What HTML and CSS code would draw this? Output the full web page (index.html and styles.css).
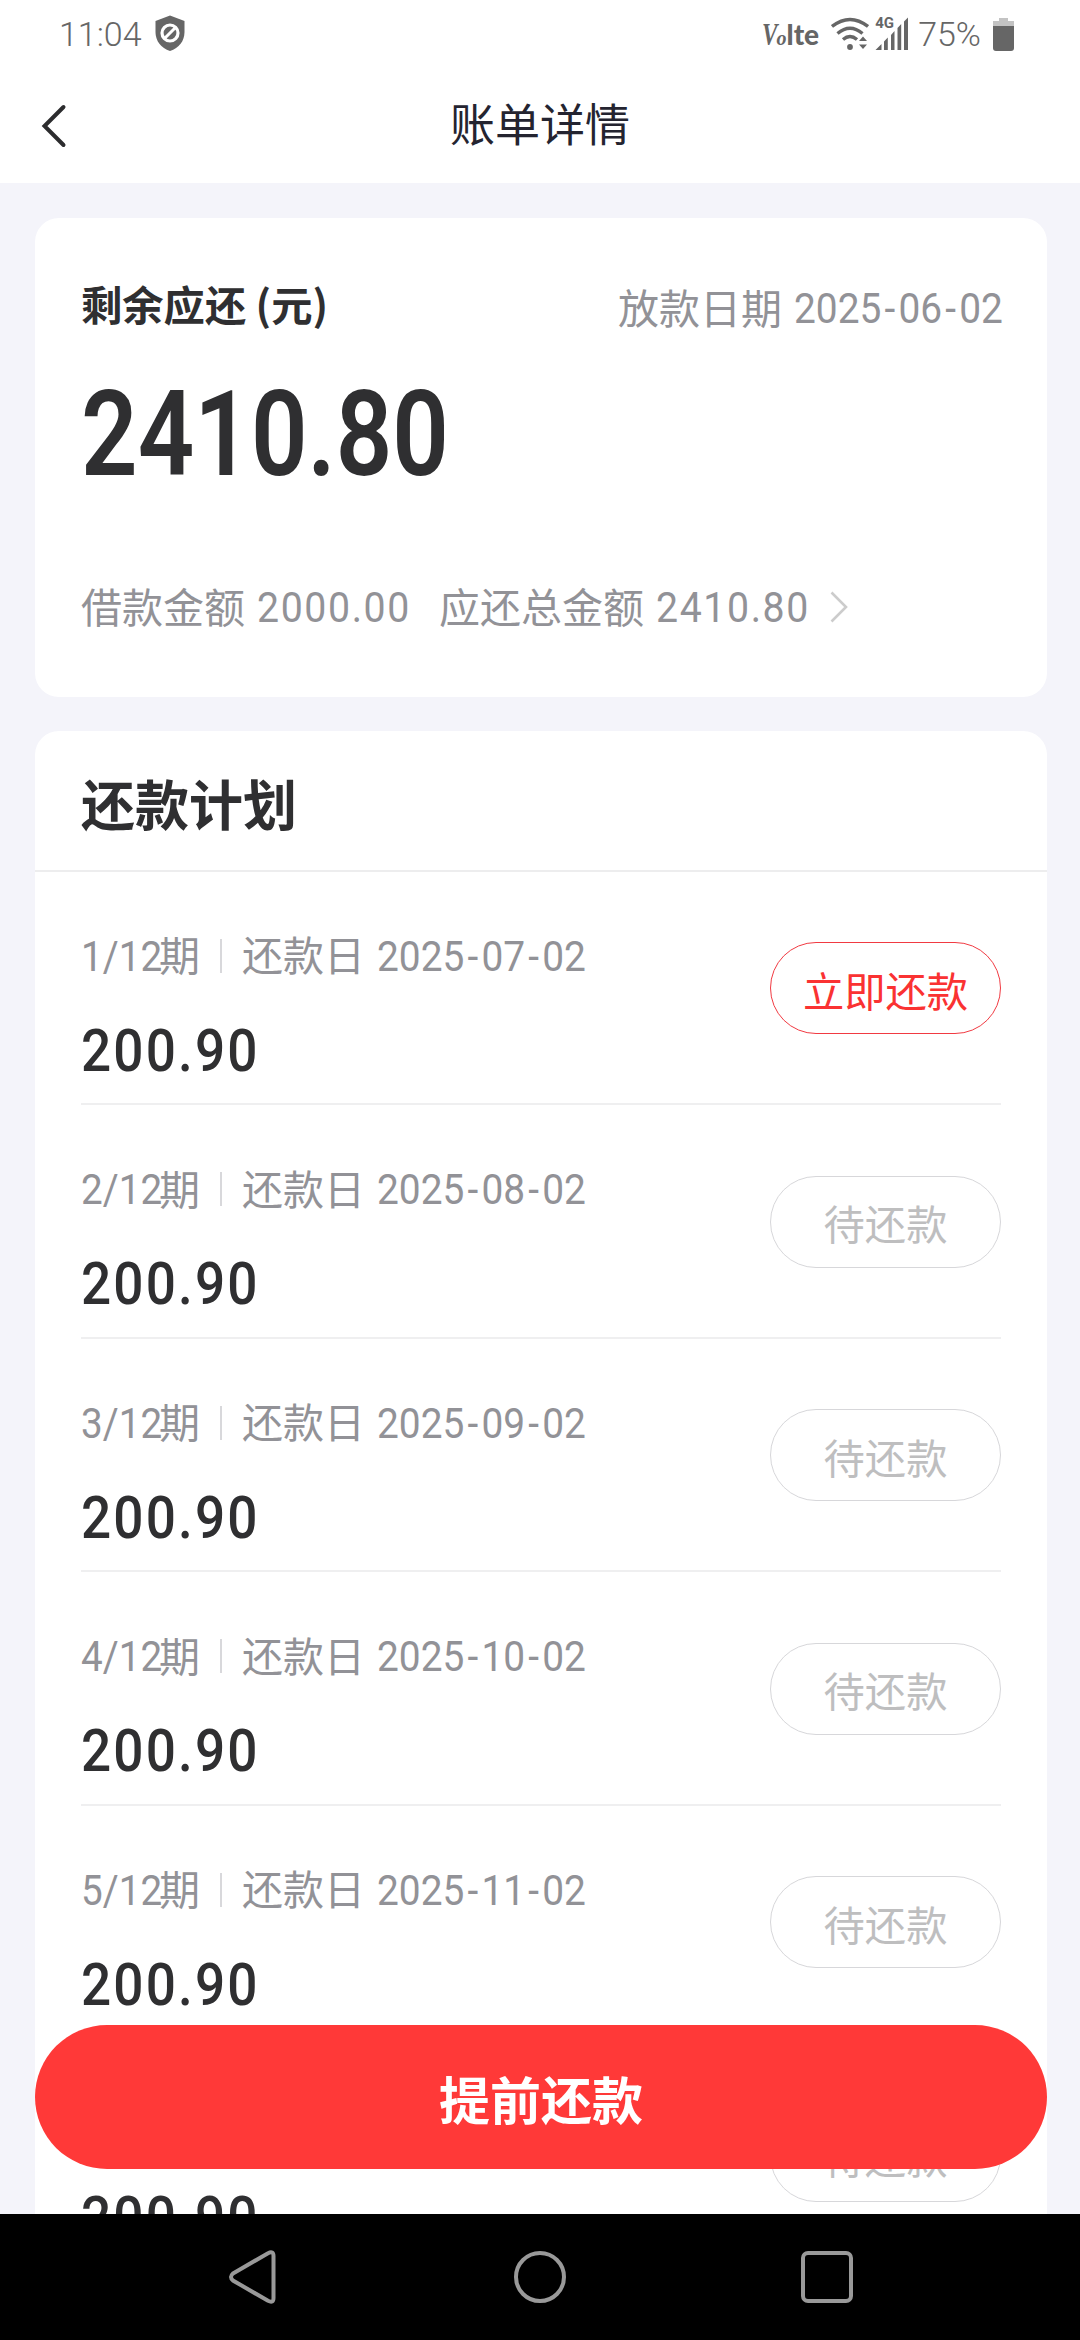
FILE: index.html
```html
<!DOCTYPE html>
<html lang="zh-CN">
<head>
<meta charset="utf-8">
<title>账单详情</title>
<link rel="stylesheet" href="styles.css">
</head>
<body>
<div class="phone">
  <div class="statusbar">
    <span class="clock">11:04</span>
    <svg class="shield" width="30" height="37" viewBox="0 0 30 37"><path d="M15 .5 29.500 6V17C29.500 26 24 33 15 36 6 33 .5 26 .5 17V6z" fill="#666"/><circle cx="15" cy="18" r="8" fill="none" stroke="#fff" stroke-width="3.200"/><path d="M9.500 23.500 20.500 12.500" stroke="#fff" stroke-width="3"/></svg>
    <span class="spacer"></span>
    <span class="volte"><i>V</i><em>o</em><b>lte</b></span>
    <svg class="wifi" width="38" height="34" viewBox="0 0 38 34"><g fill="none" stroke="#666" stroke-width="3.400"><path d="M1 9.500Q19-4.500 37 9.500M6.500 16.500Q19 6 31.500 16.500M12 22.500Q19 16.500 26 22.500"/></g><circle cx="19" cy="30" r="2.900" fill="#666"/><path d="m28 24 4-4.500 4 4.500zM28 27.500h8l-4 4.500z" fill="#666"/></svg>
    <span class="cell"><span class="net">4G</span><svg width="34" height="34" viewBox="0 0 34 34"><path d="M.5 33 6.500 27v6zM9 24.500 12.800 20.500V33H9zM16 18 19.500 14V33H16zM22.500 11 26.200 7V33h-3.700zM29 4.500 33 .5V33h-4z" fill="#666"/></svg></span>
    <span class="percent">75%</span>
    <svg class="battery" width="21" height="33" viewBox="0 0 21 33"><path d="M6 0h9v3h6v5H0V3h6z" fill="#c3c3c3"/><path d="M0 8h21v22q0 3-3 3H3q-3 0-3-3z" fill="#666"/></svg>
  </div>
  <header class="navbar">
    <svg class="back" width="26" height="44" viewBox="0 0 26 44"><path d="M22.500 3 3.500 22 22.500 41" fill="none" stroke="#2c2c2e" stroke-width="4" stroke-linecap="round"/></svg>
    <h1>账单详情</h1>
  </header>
  <main class="content">
    <section class="card summary">
      <div class="summary-head">
        <h2>剩余应还 (元)</h2>
        <div class="line"><span>放款日期</span><span class="date">2025<i>-</i>06<i>-</i>02</span></div>
      </div>
      <div class="total">2410.80</div>
      <div class="line details"><span>借款金额</span><span class="sum">2000.00</span><span class="second">应还总金额</span><span class="sum">2410.80</span>
        <svg class="chevron" width="20" height="34" viewBox="0 0 20 34"><path d="M2.500 2.500 17 17 2.500 31.500" fill="none" stroke="#ccc" stroke-width="2.600"/></svg>
      </div>
    </section>
    <section class="card plan">
      <h2>还款计划</h2>
      <ul>
        <li><div><div class="line"><span class="term">1/12</span><span>期</span><b></b><span>还款日</span><span class="date">2025<i>-</i>07<i>-</i>02</span></div><div class="amount">200.90</div></div><button class="pill due">立即还款</button></li>
        <li><div><div class="line"><span class="term">2/12</span><span>期</span><b></b><span>还款日</span><span class="date">2025<i>-</i>08<i>-</i>02</span></div><div class="amount">200.90</div></div><button class="pill">待还款</button></li>
        <li><div><div class="line"><span class="term">3/12</span><span>期</span><b></b><span>还款日</span><span class="date">2025<i>-</i>09<i>-</i>02</span></div><div class="amount">200.90</div></div><button class="pill">待还款</button></li>
        <li><div><div class="line"><span class="term">4/12</span><span>期</span><b></b><span>还款日</span><span class="date">2025<i>-</i>10<i>-</i>02</span></div><div class="amount">200.90</div></div><button class="pill">待还款</button></li>
        <li><div><div class="line"><span class="term">5/12</span><span>期</span><b></b><span>还款日</span><span class="date">2025<i>-</i>11<i>-</i>02</span></div><div class="amount">200.90</div></div><button class="pill">待还款</button></li>
        <li class="last"><div class="amount">200.90</div><button class="pill">待还款</button></li>
      </ul>
    </section>
  </main>
  <button class="prepay">提前还款</button>
  <footer class="system">
    <svg width="56" height="60" viewBox="0 0 56 60"><path d="M8 26.500 43 6.200Q48.500 3.500 48.500 9V51Q48.500 56.500 43 53.800L8 33.500Q4 30 8 26.500z" fill="none" stroke="#999" stroke-width="4"/></svg>
    <svg width="56" height="60" viewBox="0 0 56 60"><circle cx="28" cy="30" r="24" fill="none" stroke="#999" stroke-width="4"/></svg>
    <svg width="56" height="60" viewBox="0 0 56 60"><rect x="4" y="6" width="48" height="48" rx="5" fill="none" stroke="#999" stroke-width="4"/></svg>
  </footer>
</div>
</body>
</html>
```
FILE: styles.css
```css
* { box-sizing: border-box; }
body { margin: 0; background: #f4f4fa; font-family: "Noto Sans CJK SC", sans-serif; }
h1, h2, ul { margin: 0; padding: 0; list-style: none; }
i, em { font-style: normal; }
button { font-family: inherit; padding: 0; }

.phone { position: relative; display: flex; flex-direction: column; width: 1080px; height: 2340px; overflow: hidden; }

.statusbar { display: flex; flex: none; height: 68px; padding: 0 66px 0 59px; background: #fff; align-items: center; font-family: Roboto, sans-serif; color: #666; }
.clock, .percent { font-size: 34px; line-height: 68px; font-weight: 360; }
.shield { margin: 0 0 2px 13px; }
.spacer { flex: 1; }
.volte { display: flex; align-items: baseline; font-family: Lato, sans-serif; line-height: 40px; }
.volte i { width: 15px; font: italic 700 31px/30px "Liberation Serif", serif; transform: scaleX(.75); transform-origin: left center; }
.volte em { font: italic 700 20px/20px "Liberation Serif", serif; }
.volte b { font-size: 28px; font-weight: 900; }
.wifi { margin-left: 12px; }
.cell { position: relative; display: flex; margin-left: 6px; }
.net { position: absolute; left: 0; top: -1px; font-size: 15px; line-height: 15px; font-weight: 700; }
.percent { margin-left: 9px; }
.battery { margin-left: 12px; }

.navbar { display: grid; grid-template-columns: 80px 1fr 80px; align-items: center; flex: none; height: 115px; background: #fff; }
.back { margin-left: 41px; }
.navbar h1 { padding-bottom: 5px; font-size: 45px; line-height: 60px; font-weight: 400; text-align: center; color: #242430; }

.content { display: flex; flex-direction: column; flex: none; gap: 34px; height: 2031px; padding: 35px 33px 0 35px; overflow: hidden; }
.card { flex: none; background: #fff; border-radius: 24px; color: #2f2f31; }
.summary { height: 478.500px; padding: 55px 46px 0; }
.summary-head { display: flex; justify-content: space-between; }
.summary h2 { font-size: 41.300px; line-height: 60px; font-weight: 700; }
.line { display: flex; height: 50px; align-items: center; font-size: 41px; line-height: 50px; color: #929297; white-space: nowrap; }
.line span { padding-bottom: 5px; }
.summary-head .line { margin-top: 10px; }
.date, .term, .sum, .total, .amount { font-family: Roboto, sans-serif; transform-origin: left center; }
.line .date, .line .term, .line .sum { padding: 2px 0 0; font-size: 42px; font-weight: 400; }
.date { width: 208px; margin-left: 12px; transform: scaleX(.925); }
.summary-head .date { width: 207px; }
.date i { display: inline-block; width: 18.500px; text-align: center; }
.total { margin-top: 42px; height: 120px; font-size: 118px; line-height: 120px; font-weight: 600; transform: scaleX(.84); }
.details { margin-top: 87px; }
.sum { width: 150px; margin-left: 12px; letter-spacing: 1.700px; transform: scaleX(.935); }
.second { margin-left: 32px; }
.chevron { margin-left: 23px; }

.plan h2 { height: 141px; padding-left: 46px; border-bottom: 2px solid #ededee; font-size: 54px; line-height: 144px; font-weight: 700; }
.plan li { display: flex; justify-content: space-between; height: 233.600px; margin: 0 46px; padding-top: 59px; border-bottom: 2px solid #efeff0; }
.term { width: 78px; transform: scaleX(.92); }
.line b { width: 2px; height: 34px; margin: 0 20px; background: #d8d8db; }
.amount { height: 60px; margin-top: 40px; font-size: 59px; line-height: 60px; font-weight: 500; letter-spacing: 2.400px; transform: scaleX(.9); }
.last .amount { margin-top: 90px; }
.pill { width: 231px; height: 92px; margin-top: 11.500px; padding-top: 1px; border: 1px solid #d7d7da; border-radius: 46px; background: #fff; font-size: 41.300px; line-height: 82px; color: #bebebf; }
.pill.due { border-color: #f13a42; color: #fa3232; }

.prepay { position: absolute; left: 35px; top: 2025px; width: 1012px; height: 144px; padding-top: 2px; border: 0; border-radius: 72px; background: #ff3938; color: #fff; font-size: 51px; line-height: 130px; font-weight: 700; }
.system { display: flex; flex: none; height: 126px; padding: 0 225px; justify-content: space-between; align-items: center; background: #000; }
```
